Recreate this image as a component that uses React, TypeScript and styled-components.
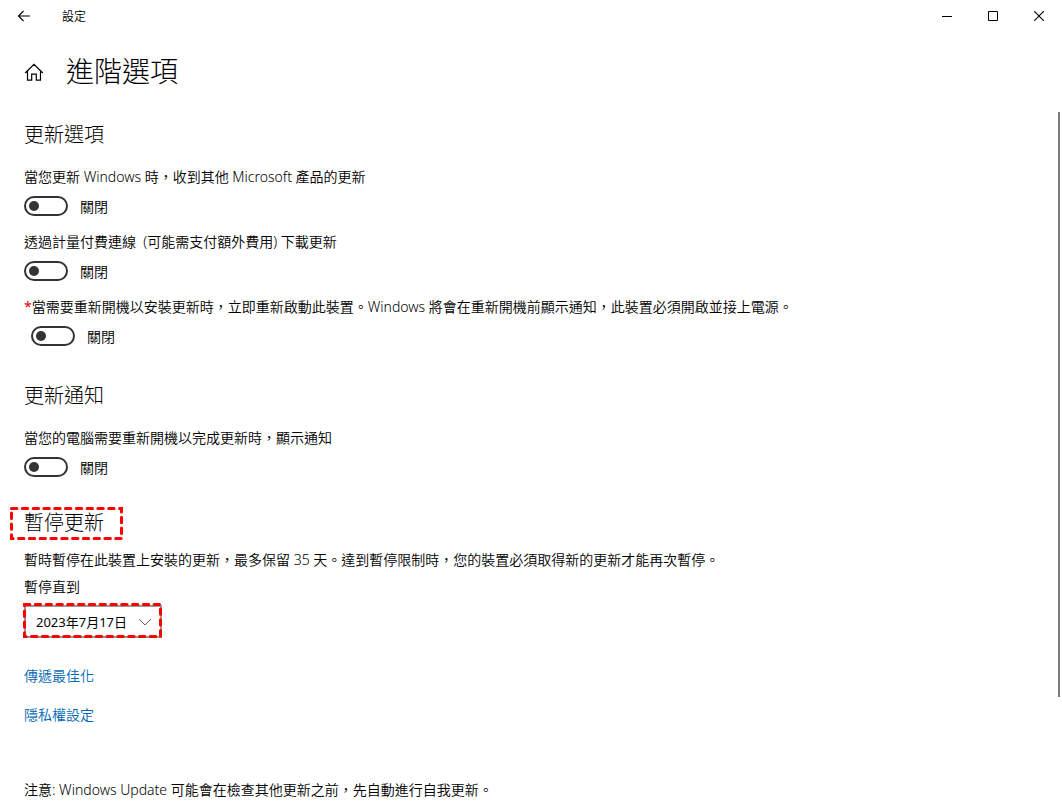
import React from 'react';
import styled, { createGlobalStyle } from 'styled-components';

const GlobalStyle = createGlobalStyle`
  *, *::before, *::after { box-sizing: border-box; }
  body {
    margin: 0;
    background: #fff;
    color: #000;
    font-family: "Noto Sans", "Noto Sans CJK TC", sans-serif;
    font-size: 14px;
    line-height: 20px;
    font-weight: 350;
  }
  h1, h2, p { margin: 0; }
  button, select, input { font: inherit; color: inherit; }
`;

const Window = styled.div`
  min-height: 100vh;
  display: flex;
  flex-direction: column;
`;

const TitleBar = styled.header`
  display: flex;
  align-items: center;
  height: 32px;
`;

const BarButton = styled.button<{ $width: number }>`
  display: flex;
  align-items: center;
  justify-content: center;
  width: ${(p) => p.$width}px;
  height: 32px;
  padding: 0;
  border: 0;
  background: none;
`;

const AppName = styled.span`
  flex: 1;
  padding: 2px 0 0 14px;
  font-size: 12px;
`;

const PageHeader = styled.div`
  display: flex;
  align-items: center;
  gap: 22px;
  padding: 20px 24px;
`;

const HomeButton = styled.button`
  display: flex;
  padding: 0;
  border: 0;
  background: none;
`;

const PageTitle = styled.h1`
  padding-bottom: 2px;
  font-size: 28px;
  line-height: 38px;
  font-weight: 300;
`;

const ScrollArea = styled.div`
  flex: 1;
  display: flex;
`;

const Content = styled.main`
  flex: 1;
  padding: 9px 24px 8px;
`;

const ScrollTrack = styled.div`
  width: 4px;
`;

const ScrollThumb = styled.div`
  width: 2px;
  height: 84%;
  background: #7a7a7a;
`;

const Section = styled.section<{ $after: number }>`
  display: flex;
  flex-direction: column;
  align-items: flex-start;
  margin-bottom: ${(p) => p.$after}px;
`;

const SectionTitle = styled.h2`
  position: relative;
  font-size: 20px;
  line-height: 28px;
  font-weight: 300;
`;

const Options = styled.div`
  display: flex;
  flex-direction: column;
  gap: 16px;
  margin-top: 18px;
`;

const OptionLabel = styled.label`
  display: block;
  white-space: pre-wrap;
`;

const Required = styled.span`
  color: #e00000;
  font-weight: 400;
`;

const ToggleRow = styled.div<{ $indent?: boolean }>`
  display: flex;
  align-items: center;
  gap: 12px;
  height: 20px;
  margin-top: 9px;
  padding-left: ${(p) => (p.$indent ? 7 : 0)}px;
`;

const ToggleState = styled.span`
  padding-top: 2px;
`;

const Toggle = styled.input`
  appearance: none;
  display: flex;
  align-items: center;
  width: 44px;
  height: 20px;
  margin: 0;
  padding: 0 3px;
  border: 2px solid #333;
  border-radius: 10px;

  &::before {
    content: "";
    width: 10px;
    height: 10px;
    border-radius: 50%;
    background: #333;
  }
  &:checked { justify-content: flex-end; }
`;

const Paragraph = styled.p`
  margin-top: 13px;
`;

const DateLabel = styled.label`
  margin: 7px 0 8px;
`;

const SelectBox = styled.div`
  position: relative;
  width: 138px;
`;

const DateSelect = styled.select`
  appearance: none;
  display: block;
  width: 100%;
  height: 33px;
  padding: 0 10px;
  border: 2px solid #999;
  border-radius: 0;
  background: #fff;
  font-size: 13px;
  font-weight: 400;
`;

const Chevron = styled.svg`
  position: absolute;
  right: 10px;
  top: 13px;
  pointer-events: none;
`;

const Marker = styled.svg<{ $left: number; $top: number }>`
  position: absolute;
  left: ${(p) => p.$left}px;
  top: ${(p) => p.$top}px;
  pointer-events: none;
`;

const Links = styled.nav`
  display: flex;
  flex-direction: column;
  align-items: flex-start;
  gap: 19px;
`;

const SettingsLink = styled.a`
  color: #0066b4;
  text-decoration: none;
`;

const Note = styled.p`
  margin-top: 55px;
`;

type OptionProps = { id: string; label: string; required?: boolean };

function Option({ id, label, required }: OptionProps) {
  return (
    <div>
      <OptionLabel htmlFor={id}>
        {required && <Required>*</Required>}
        {label}
      </OptionLabel>
      <ToggleRow $indent={required}>
        <Toggle type="checkbox" role="switch" id={id} />
        <ToggleState>關閉</ToggleState>
      </ToggleRow>
    </div>
  );
}

type HighlightProps = { left: number; top: number; width: number; height: number };

function Highlight({ left, top, width, height }: HighlightProps) {
  return (
    <Marker $left={left} $top={top} width={width} height={height} aria-hidden="true">
      <rect
        x="1.5"
        y="1.5"
        width={width - 3}
        height={height - 3}
        fill="none"
        stroke="#ff0000"
        strokeWidth="3"
        strokeLinecap="round"
        strokeDasharray="5.4 5.4"
      />
    </Marker>
  );
}

export default function App() {
  return (
    <Window>
      <GlobalStyle />
      <TitleBar>
        <BarButton $width={48} aria-label="返回">
          <svg width="14" height="12" viewBox="0 0 14 12" fill="none" stroke="#000" strokeWidth="1.1">
            <path d="M13 6H1.5M6.5 1L1.5 6l5 5" />
          </svg>
        </BarButton>
        <AppName>設定</AppName>
        <BarButton $width={46} aria-label="最小化">
          <svg width="10" height="10" viewBox="0 0 10 10" stroke="#000"><path d="M0 5.5h10" /></svg>
        </BarButton>
        <BarButton $width={46} aria-label="最大化">
          <svg width="10" height="10" viewBox="0 0 10 10" fill="none" stroke="#000"><path d="M.5.5h9v9h-9z" /></svg>
        </BarButton>
        <BarButton $width={46} aria-label="關閉視窗">
          <svg width="10" height="10" viewBox="0 0 10 10" fill="none" stroke="#000" strokeWidth="1.1"><path d="M0 0l10 10M10 0L0 10" /></svg>
        </BarButton>
      </TitleBar>
      <PageHeader>
        <HomeButton aria-label="首頁">
          <svg width="20" height="20" viewBox="0 0 20 20" fill="none" stroke="#000" strokeWidth="1.2">
            <path d="M1.2 11L10 2.3 18.8 11M3.5 9v9.2h4.2v-6h4.6v6h4.2V9" />
          </svg>
        </HomeButton>
        <PageTitle>進階選項</PageTitle>
      </PageHeader>
      <ScrollArea>
        <Content>
          <Section $after={36}>
            <SectionTitle>更新選項</SectionTitle>
            <Options>
              <Option id="other-products" label="當您更新 Windows 時，收到其他 Microsoft 產品的更新" />
              <Option id="metered" label="透過計量付費連線  (可能需支付額外費用) 下載更新" />
              <Option
                id="restart"
                required
                label="當需要重新開機以安裝更新時，立即重新啟動此裝置。Windows 將會在重新開機前顯示通知，此裝置必須開啟並接上電源。"
              />
            </Options>
          </Section>
          <Section $after={32}>
            <SectionTitle>更新通知</SectionTitle>
            <Options>
              <Option id="notify" label="當您的電腦需要重新開機以完成更新時，顯示通知" />
            </Options>
          </Section>
          <Section $after={28}>
            <SectionTitle>
              暫停更新
              <Highlight left={-14} top={-2} width={113} height={33} />
            </SectionTitle>
            <Paragraph>暫時暫停在此裝置上安裝的更新，最多保留 35 天。達到暫停限制時，您的裝置必須取得新的更新才能再次暫停。</Paragraph>
            <DateLabel htmlFor="pause-until">暫停直到</DateLabel>
            <SelectBox>
              <DateSelect id="pause-until">
                <option>2023年7月17日</option>
              </DateSelect>
              <Chevron width="14" height="8" viewBox="0 0 14 8" fill="none" stroke="#666">
                <path d="M1 1l6 6 6-6" />
              </Chevron>
              <Highlight left={-1} top={-2} width={139} height={35} />
            </SelectBox>
          </Section>
          <Links>
            <SettingsLink href="#delivery">傳遞最佳化</SettingsLink>
            <SettingsLink href="#privacy">隱私權設定</SettingsLink>
          </Links>
          <Note>注意: Windows Update 可能會在檢查其他更新之前，先自動進行自我更新。</Note>
        </Content>
        <ScrollTrack>
          <ScrollThumb />
        </ScrollTrack>
      </ScrollArea>
    </Window>
  );
}
